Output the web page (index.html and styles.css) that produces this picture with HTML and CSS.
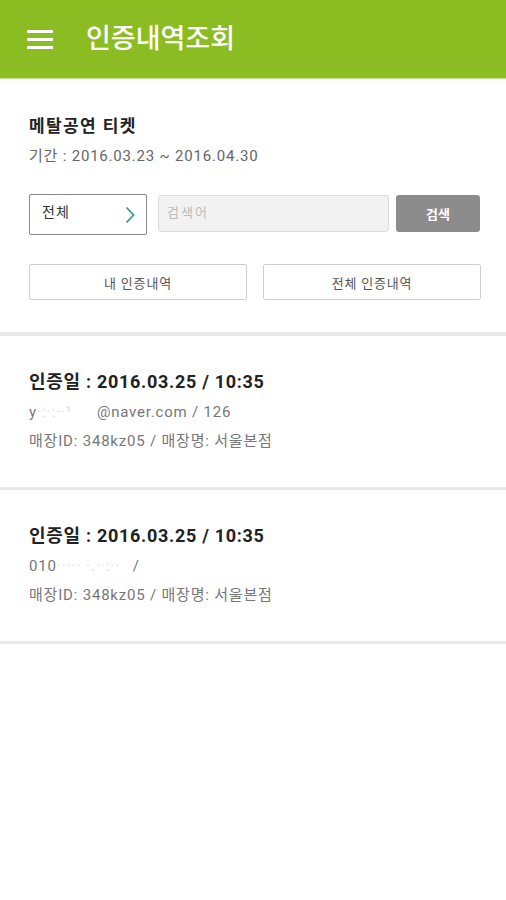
FILE: index.html
```html
<!DOCTYPE html>
<html lang="ko">
<head>
    <meta charset="UTF-8">
    <meta name="viewport" content="width=device-width, initial-scale=1.0">
    <title>인증내역조회</title>
    <link rel="stylesheet" href="styles.css">
</head>
<body>
    <header class="topbar">
        <svg class="menu-icon" width="26" height="20" viewBox="0 0 26 20">
            <rect x="0" y="1" width="26" height="3" fill="#fff"/>
            <rect x="0" y="9" width="26" height="3" fill="#fff"/>
            <rect x="0" y="17" width="26" height="3" fill="#fff"/>
        </svg>
        <h1 class="topbar-title">인증내역조회</h1>
    </header>

    <!-- 티켓 정보 / 검색 -->
    <section class="search-panel">
        <h2 class="ticket-name">메탈공연 티켓</h2>
        <p class="ticket-period">기간 : 2016.03.23 ~ 2016.04.30</p>

        <div class="search-row">
            <div class="select-box">
                <span>전체</span>
                <svg class="chevron" width="10" height="18" viewBox="0 0 10 18">
                    <path d="M1.5 1.5 L8.5 9 L1.5 16.5" fill="none" stroke="#3f9a8c" stroke-width="1.8"/>
                </svg>
            </div>
            <div class="search-input">검색어</div>
            <button class="search-btn">검색</button>
        </div>

        <div class="tab-row">
            <button class="tab-btn">내 인증내역</button>
            <button class="tab-btn">전체 인증내역</button>
        </div>
    </section>

    <!-- 인증 내역 목록 -->
    <ul class="history-list">
        <li class="history-item">
            <p class="history-date">인증일 : 2016.03.25 / 10:35</p>
            <p class="history-info">y<span class="masked">·:·:··¹</span>@naver.com / 126</p>
            <p class="history-info">매장ID: 348kz05 / 매장명: 서울본점</p>
        </li>
        <li class="history-item">
            <p class="history-date">인증일 : 2016.03.25 / 10:35</p>
            <p class="history-info">010<span class="masked phone">····· ·.··:··</span>/</p>
            <p class="history-info">매장ID: 348kz05 / 매장명: 서울본점</p>
        </li>
    </ul>
</body>
</html>
```

FILE: styles.css
```css
body {
    margin: 0;
    background-color: #fff;
    font-family: Roboto, "Noto Sans CJK KR", sans-serif;
    color: #222;
}
p, h1, h2, ul {
    margin: 0;
    padding: 0;
}

/* 상단바 */
.topbar {
    height: 78px;
    background-color: #8bbd23;
    border-bottom: 1px solid #c9e196;
    display: flex;
    align-items: center;
    padding-left: 27px;
}
.topbar-title {
    margin-left: 33px;
    color: #fff;
    font-size: 27px;
    font-weight: 500;
    line-height: 30px;
}

/* 검색 영역 */
.search-panel {
    padding: 36px 25px 32px 29px;
    border-bottom: 4px solid #e8e8e8;
}
.ticket-name {
    font-size: 17px;
    font-weight: bold;
    line-height: 22px;
    letter-spacing: 1.4px;
    color: #222;
}
.ticket-period {
    margin-top: 8px;
    font-size: 15px;
    line-height: 22px;
    letter-spacing: 0.8px;
    color: #666;
}
.search-row {
    margin-top: 27px;
    display: flex;
    align-items: flex-start;
}
.select-box {
    box-sizing: border-box;
    width: 118px;
    height: 41px;
    border: 1px solid #8a8a8a;
    border-radius: 2px;
    padding: 6px 11px 0 12px;
    display: flex;
    justify-content: space-between;
    align-items: flex-start;
    font-size: 14px;
    line-height: 22px;
    letter-spacing: 1px;
    color: #333;
}
.chevron {
    margin-top: 5px;
}
.search-input {
    box-sizing: border-box;
    width: 231px;
    height: 37px;
    margin: 1px 0 0 11px;
    padding: 6px 8px;
    background-color: #f2f2f2;
    border: 1px solid #dcdcdc;
    border-radius: 3px;
    font-size: 13px;
    line-height: 22px;
    letter-spacing: 2px;
    color: #bbb;
}
.search-btn {
    width: 84px;
    height: 37px;
    margin: 1px 0 0 7px;
    background-color: #8c8c8c;
    border: none;
    border-radius: 3px;
    font-family: inherit;
    font-size: 13px;
    font-weight: bold;
    color: #fff;
}
.tab-row {
    margin-top: 29px;
    display: flex;
    gap: 16px;
}
.tab-btn {
    width: 218px;
    height: 36px;
    background-color: #fff;
    border: 1px solid #cfcfcf;
    border-radius: 2px;
    font-family: inherit;
    font-size: 13px;
    letter-spacing: 0.8px;
    color: #555;
}

/* 인증 내역 */
.history-list {
    list-style: none;
}
.history-item {
    padding: 34px 29px 31px;
    border-bottom: 3px solid #e8e8e8;
}
.history-date {
    font-size: 18px;
    font-weight: bold;
    line-height: 24px;
    letter-spacing: 0.7px;
    margin-bottom: 4px;
    color: #222;
}
.history-info {
    font-size: 15px;
    line-height: 29px;
    letter-spacing: 0.8px;
    color: #777;
}
.masked {
    display: inline-block;
    width: 60px;
    color: #ddd;
    letter-spacing: 1px;
}
.masked.phone {
    width: 76px;
}
```
